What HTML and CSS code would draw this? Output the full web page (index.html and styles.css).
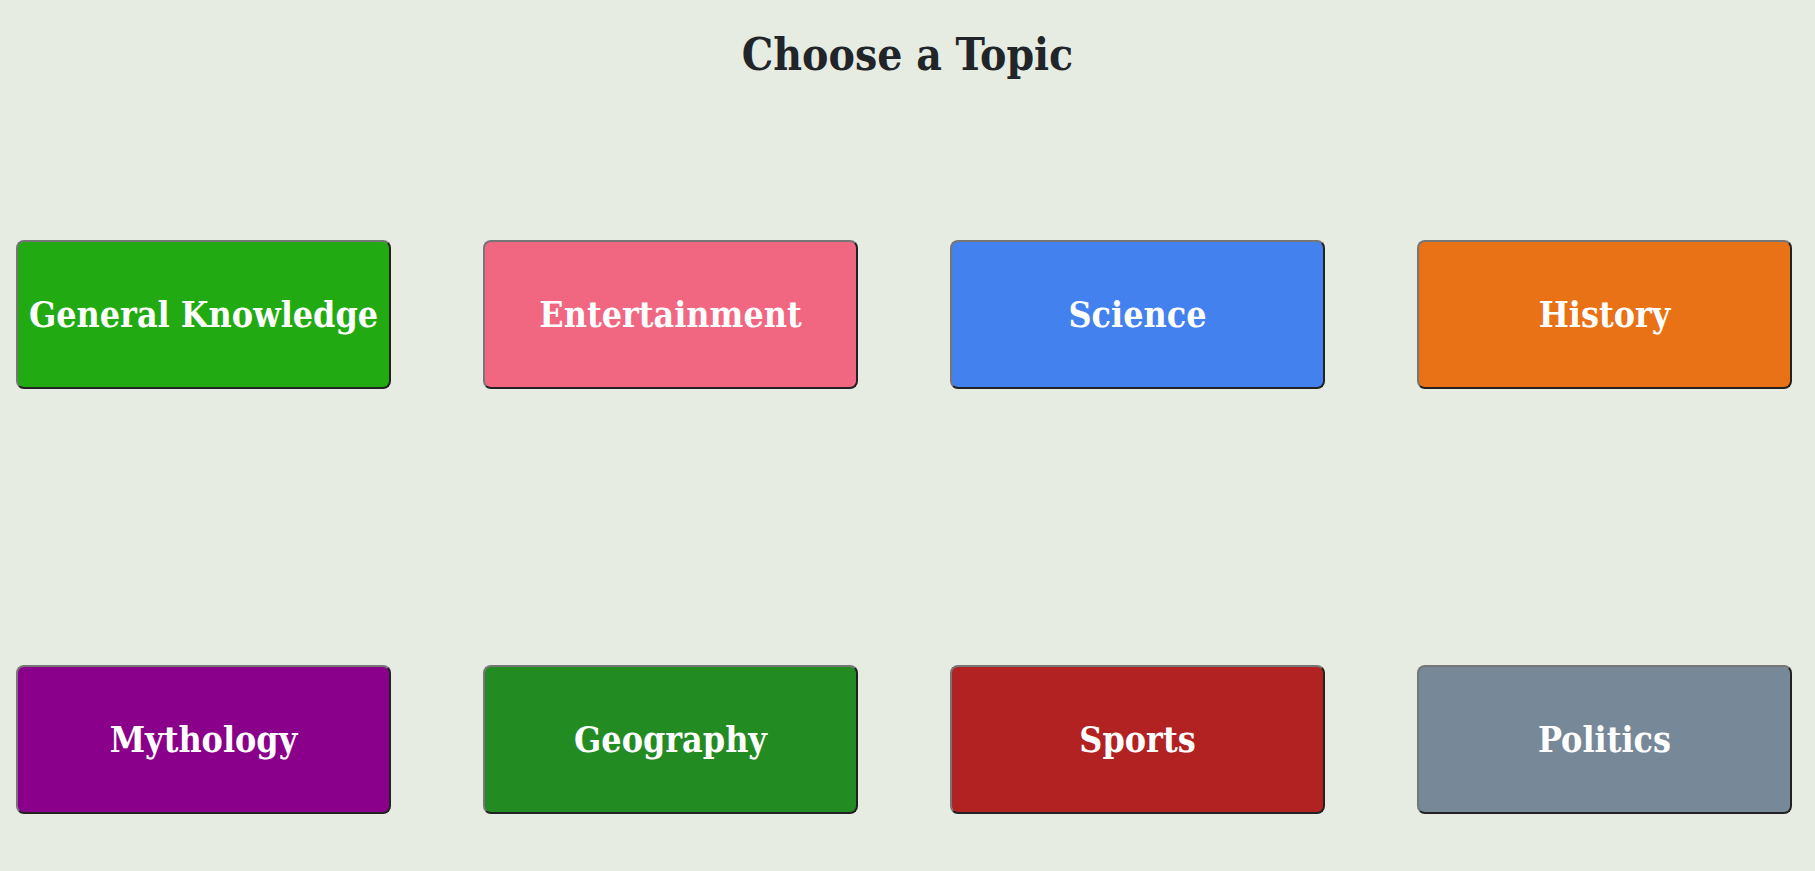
FILE: index.html
```html
<!DOCTYPE html>
<html lang="en">
<head>
<meta charset="utf-8">
<title>Choose a Topic</title>
<link rel="stylesheet" href="styles.css">
</head>
<body>
<main class="page">
  <h1 class="title">Choose a Topic</h1>
  <div class="topics">
    <button class="topic topic-general">General Knowledge</button>
    <button class="topic topic-entertainment">Entertainment</button>
    <button class="topic topic-science">Science</button>
    <button class="topic topic-history">History</button>
    <button class="topic topic-mythology">Mythology</button>
    <button class="topic topic-geography">Geography</button>
    <button class="topic topic-sports">Sports</button>
    <button class="topic topic-politics">Politics</button>
  </div>
</main>
</body>
</html>
```

FILE: styles.css
```css
html, body {
  margin: 0;
  padding: 0;
}

body {
  background: #e6ece2;
  font-family: "DejaVu Serif", "Liberation Serif", serif;
  font-stretch: condensed;
  color: #212529;
}

.page {
  display: flex;
  flex-direction: column;
}

.title {
  margin: 23px 0 0;
  text-align: center;
  font-size: 44px;
  line-height: 64px;
  font-weight: 700;
  font-stretch: condensed;
  color: #212529;
}

.topics {
  display: grid;
  grid-template-columns: repeat(4, 375px);
  justify-content: space-between;
  row-gap: 276px;
  padding: 153px 23px 0 16px;
}

.topic {
  height: 149px;
  margin: 0;
  padding: 0;
  border: 2px solid;
  border-color: #767676 #222222 #222222 #767676;
  border-radius: 8px;
  font-family: "DejaVu Serif", "Liberation Serif", serif;
  font-stretch: condensed;
  font-size: 35.5px;
  font-weight: 700;
  white-space: nowrap;
  color: #ffffff;
  cursor: pointer;
}

.topic-general { background: #21aa12; }
.topic-entertainment { background: #f16680; }
.topic-science { background: #4281ee; }
.topic-history { background: #e97116; }
.topic-mythology { background: #8b008b; }
.topic-geography { background: #228b22; }
.topic-sports { background: #b22222; }
.topic-politics { background: #778899; }
```
